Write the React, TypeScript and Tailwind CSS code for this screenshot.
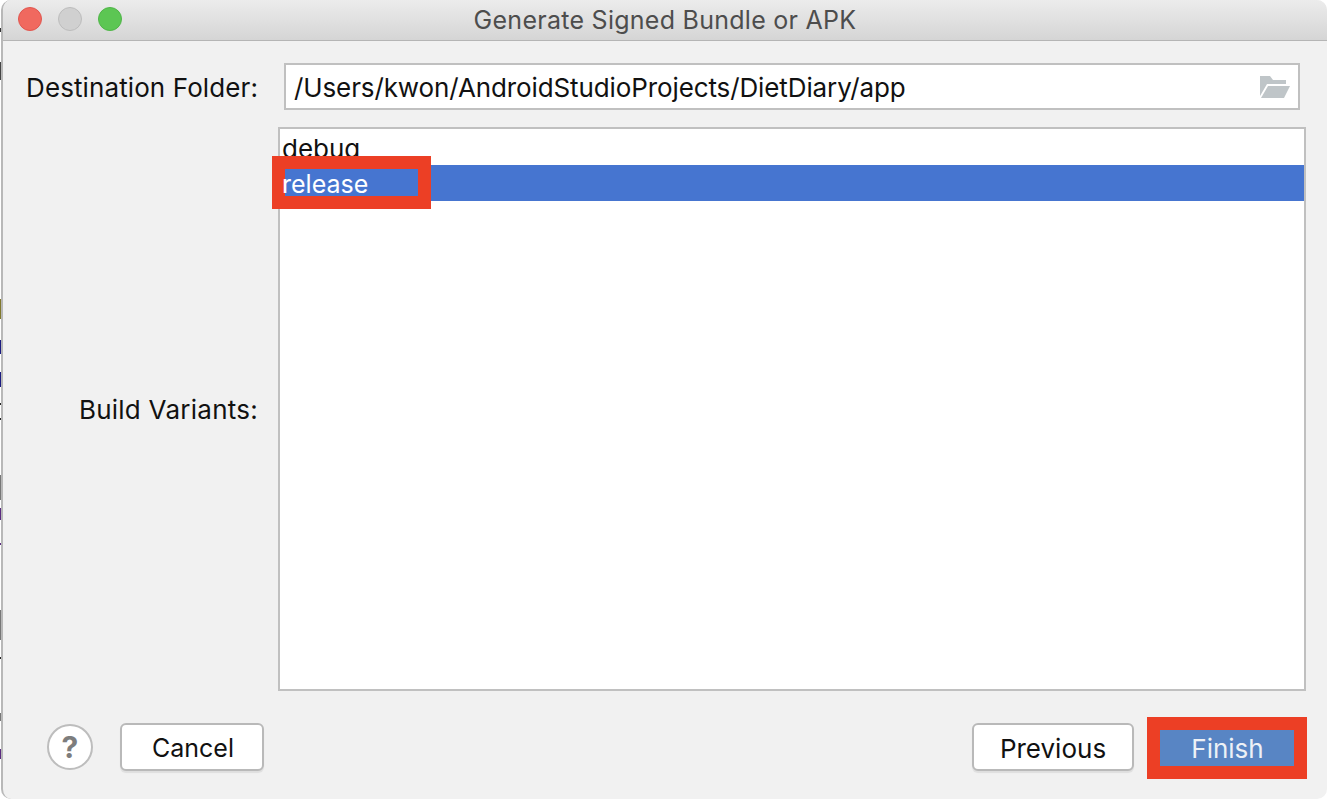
const font = { fontFamily: 'Inter, "Liberation Sans", sans-serif' };

// bits of the window behind the dialog, showing past its left edge
const behindClasses = [
  'top-[28px] h-[4px] bg-[#333]',
  'top-[62px] h-[18px] bg-[#444]',
  'top-[299px] h-[20px] bg-[#80782c]',
  'top-[340px] h-[14px] bg-[#1a1a80]',
  'top-[372px] h-[15px] bg-[#1a1a80]',
  'top-[403px] h-[2px] bg-[#222]',
  'top-[418px] h-[2px] bg-[#222]',
  'top-[475px] h-[25px] bg-[#777]',
  'top-[508px] h-[12px] bg-[#5a2a80]',
  'top-[543px] h-[2px] bg-[#5a2a80]',
  'top-[610px] h-[30px] bg-[#777]',
  'top-[657px] h-[2px] bg-[#222]',
  'top-[713px] h-[8px] bg-[#777]',
  'top-[749px] h-[10px] bg-[#5a2a80]',
];

function FolderIcon() {
  return (
    <svg width="30" height="22" viewBox="0 0 30 22" className="shrink-0">
      <path d="M0 0H10L13 4H26V8H7L0 20Z" fill="#bfc5c8" />
      <path d="M8 10H30L24 22H1Z" fill="#bfc5c8" />
    </svg>
  );
}

function TrafficLight({ className }: { className: string }) {
  return <span className={`h-6 w-6 rounded-full border ${className}`} />;
}

function DialogButton({ label, className }: { label: string; className: string }) {
  return (
    <button
      className={`mb-[2px] flex h-12 items-center justify-center rounded-md border-2 border-[#b9b9b9] bg-white pt-[3px] text-[#111] shadow-[0_2px_1px_rgba(0,0,0,0.08)] ${className}`}
    >
      {label}
    </button>
  );
}

export default function App() {
  return (
    <div style={font} className="relative h-[799px] w-[1327px] overflow-hidden bg-white">
      {behindClasses.map((c) => (
        <span key={c} className={`absolute left-0 w-[2px] ${c}`} />
      ))}
      <div className="relative ml-px h-full overflow-hidden rounded-[10px] border-l-2 border-[#b8b8b8] bg-[#f1f1f1]">
        <header className="relative flex h-[41px] items-center justify-center border-b border-[#b5b5b5] bg-gradient-to-b from-[#ececec] to-[#d5d5d5]">
          <div className="absolute left-[15px] top-[7px] flex gap-4">
            <TrafficLight className="border-[#e0564f] bg-[#f0695f]" />
            <TrafficLight className="border-[#bcbcbc] bg-[#d0d0d0]" />
            <TrafficLight className="border-[#4fb548] bg-[#5cc653]" />
          </div>
          <h1 className="text-[25px] font-normal leading-none tracking-[0.27px] text-[#4d4d4d]">
            Generate Signed Bundle or APK
          </h1>
        </header>

        <main className="relative pt-[22px]">
          <div className="flex h-[47px] items-center">
            <label className="w-[255px] whitespace-nowrap pt-[2px] text-right text-[26px] tracking-[0.1px] text-[#111]">Destination Folder:</label>
            <div className="ml-[26px] flex h-[47px] w-[1016px] items-center justify-between border-2 border-[#c0c0c0] bg-white pl-[8px] pr-[8px]">
              <span className="pt-[2px] text-[26px] tracking-[-0.11px] text-[#111]">/Users/kwon/AndroidStudioProjects/DietDiary/app</span>
              <FolderIcon />
            </div>
          </div>

          <div className="mt-[17px] flex h-[564px] items-center">
            <label className="w-[255px] whitespace-nowrap text-right text-[26px] tracking-[0.25px] text-[#111]">Build Variants:</label>
            <div className="ml-[20px] h-full w-[1028px] border-2 border-[#c0c0c0] bg-white">
              <div className="flex h-[36px] items-center pl-[2px] pt-[3px] text-[26px] text-[#111]">debug</div>
              <div className="h-[36px] bg-[#4675d0]" />
            </div>
          </div>

          {/* annotation box drawn over the selected row */}
          <div className="absolute left-[269px] top-[115px] flex h-[53px] w-[159px] items-center border-[13px] border-[#ec3f25] bg-[#4675d0] text-[25px] leading-none text-white">
            <span className="-ml-[3px] pt-1">release</span>
          </div>
        </main>

        <footer className="mt-[26px] flex items-center pl-[44px] pr-[20px]">
          <span className="mb-[2px] flex h-[46px] w-[46px] items-center justify-center rounded-full border-2 border-[#bdbdbd] bg-white text-[30px] font-bold leading-none text-[#7d7d7d]">
            ?
          </span>
          <div className="ml-[27px]">
            <DialogButton label="Cancel" className="w-[144px] pl-[2px] text-[25px]" />
          </div>
          <div className="ml-auto">
            <DialogButton label="Previous" className="w-[162px] text-[26px]" />
          </div>
          <div className="ml-[13px] flex h-[62px] w-[160px] items-center justify-center border-[13px] border-[#ec3f25] bg-[#5885c4] pl-px text-[26px] text-[#edf1f6]">
            Finish
          </div>
        </footer>
      </div>
    </div>
  );
}
